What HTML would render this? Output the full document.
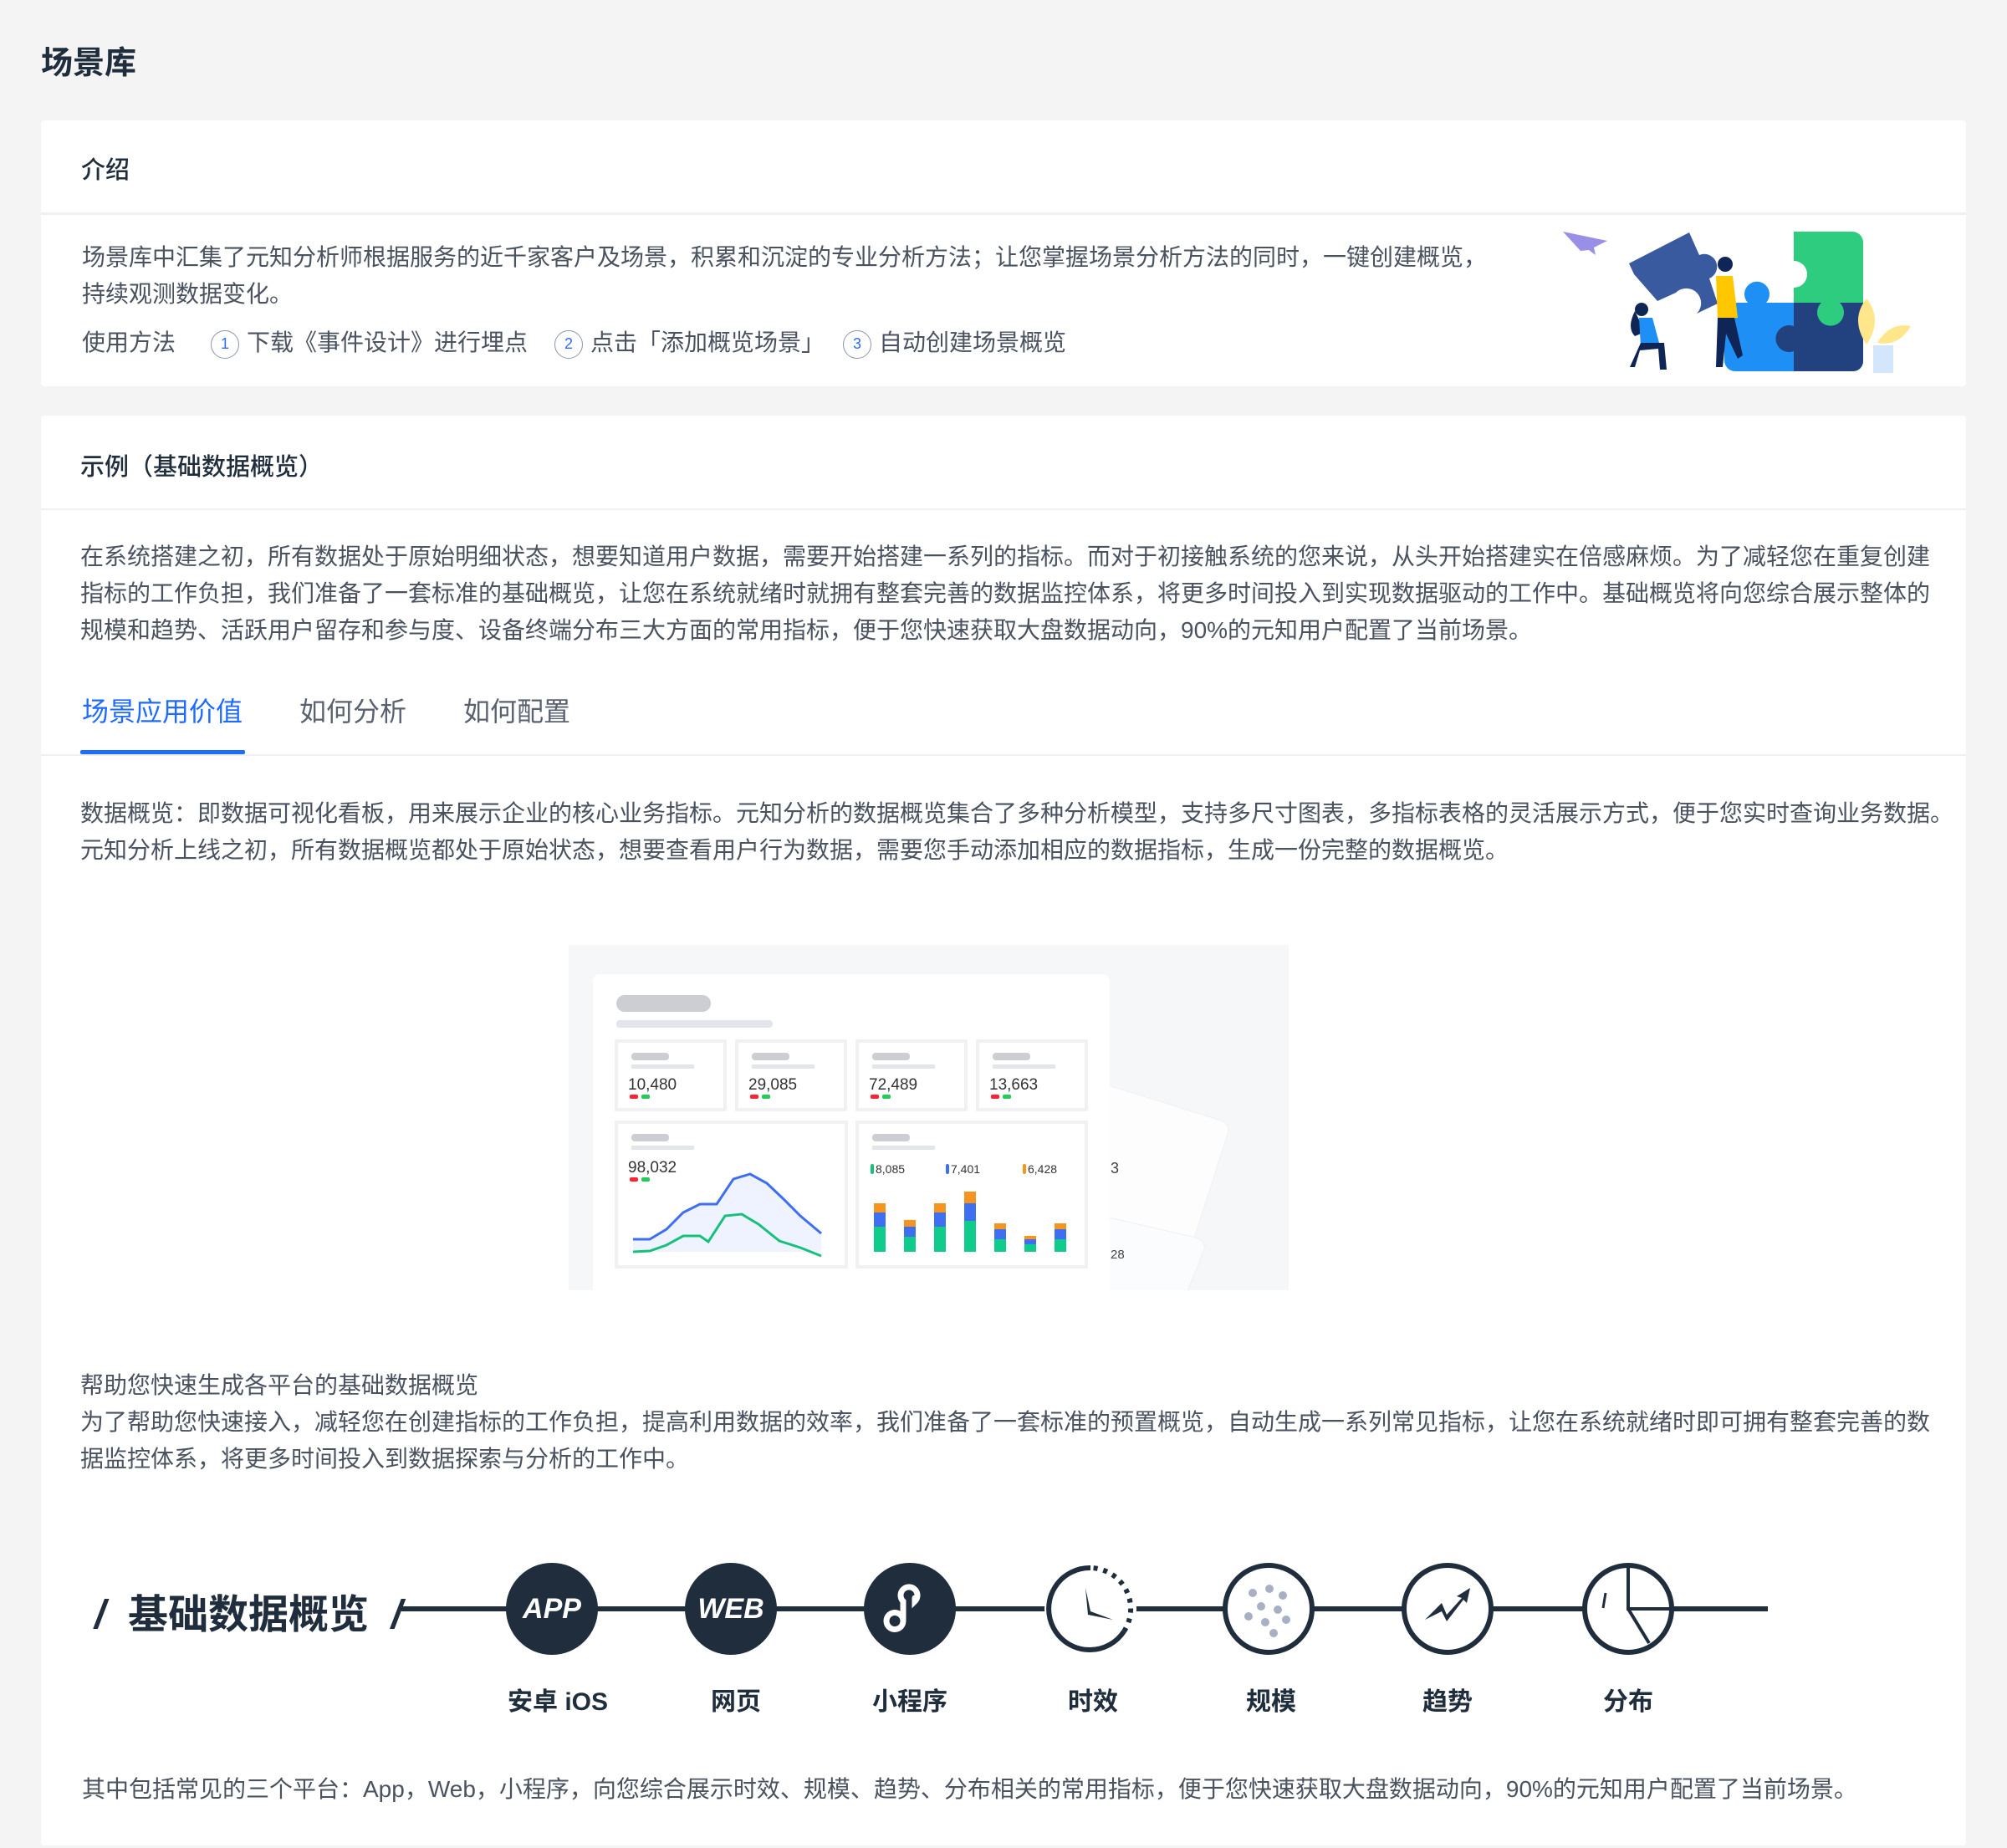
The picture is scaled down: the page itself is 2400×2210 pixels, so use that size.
<!DOCTYPE html>
<html><head><meta charset="utf-8"><style>
*{margin:0;padding:0;box-sizing:border-box}
body{width:2400px;height:2210px;background:#f4f4f4;font-family:"Liberation Sans","Noto Sans CJK SC",sans-serif;color:#1f2d3d;position:relative;overflow:hidden}
.abs{position:absolute;white-space:nowrap}
.card{position:absolute;background:#fff;border-radius:4px}
.hd{font-size:29px;color:#1f2d3d;font-weight:500}
.tx{font-size:28px;color:#4a5260;line-height:44px}
.circ{display:inline-block;width:34px;height:34px;border:1.5px solid #8a96a8;border-radius:50%;color:#2f6bff;font-size:18px;text-align:center;line-height:31px;vertical-align:middle;margin-right:9px}
.node{position:absolute;width:110px;height:110px;border-radius:50%;top:1869px}
.lbl{position:absolute;top:2010px;font-size:30px;font-weight:bold;color:#1f2d3d;width:200px;text-align:center}
</style></head><body>
<div class="abs" style="left:49px;top:44px;font-size:38px;font-weight:bold;color:#1f2d3d">场景库</div>

<div class="card" style="left:49px;top:144px;width:2302px;height:318px">
  <div style="position:absolute;left:0;right:0;top:110px;height:3px;background:#f0f0f0"></div>
</div>
<div class="abs hd" style="left:97px;top:180px">介绍</div>
<div class="abs tx" style="left:98px;top:286px">场景库中汇集了元知分析师根据服务的近千家客户及场景，积累和沉淀的专业分析方法；让您掌握场景分析方法的同时，一键创建概览，<br>持续观测数据变化。</div>
<div class="abs" style="left:98px;top:390px;font-size:28px;color:#4a5260;line-height:40px">使用方法<span style="display:inline-block;width:42px"></span><span class="circ">1</span>下载《事件设计》进行埋点<span style="display:inline-block;width:32px"></span><span class="circ">2</span>点击「添加概览场景」<span style="display:inline-block;width:22px"></span><span class="circ">3</span>自动创建场景概览</div>

<svg class="abs" style="left:1860px;top:270px" width="440" height="185" viewBox="1860 270 440 185">
  <polygon points="1869,277 1922,288 1906,296 1908,305 1900,299 1890,300" fill="#9a8fe6"/>
  <path d="M2145,277 h70 a13 13 0 0 1 13 13 v72 h-83 v-18 a14 14 0 1 0 0-32 z" fill="#2ecc7f"/>
  <path d="M2145,362 h83 v70 a12 12 0 0 1-12 12 h-71 z" fill="#22427f"/>
  <path d="M2178,362 a16 16 0 1 0 22 0 z" fill="#2ecc7f"/>
  <path d="M2062,362 h83 v82 h-70 a13 13 0 0 1-13-13 z" fill="#1e90f5"/>
  <path d="M2090,362 a15 15 0 1 1 22 0 z" fill="#1e90f5"/>
  <path d="M2145,390 a16 16 0 1 0 0 30 z" fill="#22427f"/>
  <path d="M1948,315 l72-37 l12 27 a15 15 0 1 1 12 28 l10 30 l-25 12 a16 16 0 1 0-25 -25 l-22 10 l-28-32 z" fill="#3a5aa0"/>
  <circle cx="1963" cy="370" r="8" fill="#0f2556"/><path d="M1955,372 q-10 20 0 30 l12-5z" fill="#0f2556"/>
  <path d="M1960,380 l16 0 l8 30 l-22 4z" fill="#1e90f5"/><path d="M1962,410 l28 0 l3 32 l-8 0 l-2-25 l-22 2 l-6 20 l-6 0z" fill="#0f2556"/>
  <circle cx="2063" cy="316" r="9" fill="#0f2556"/><path d="M2052,330 l20 0 l6 50 l-24 2z" fill="#ffc700"/>
  <path d="M2054,380 l20 0 l10 45 l-6 4 l-14-30 l-4 40 l-8 0z" fill="#0f2556"/>
  <path d="M2232,412 q-20-30 0-55 q20 25 0 55z M2245,410 q15-25 40-20 q-15 25-40 20z" fill="#ffe68a"/>
  <rect x="2240" y="413" width="24" height="33" fill="#d3e6fb"/>
</svg>

<div class="card" style="left:49px;top:497px;width:2302px;height:1710px">
  <div style="position:absolute;left:0;right:0;top:111px;height:2px;background:#f0f0f0"></div>
  <div style="position:absolute;left:0;right:0;top:405px;height:2px;background:#f0f0f0"></div>
  <div style="position:absolute;left:47px;top:400px;width:197px;height:5px;background:#1f6bff;border-radius:2px"></div>
</div>
<div class="abs hd" style="left:96px;top:535px">示例（基础数据概览）</div>
<div class="abs tx" style="left:96px;top:644px">在系统搭建之初，所有数据处于原始明细状态，想要知道用户数据，需要开始搭建一系列的指标。而对于初接触系统的您来说，从头开始搭建实在倍感麻烦。为了减轻您在重复创建<br>指标的工作负担，我们准备了一套标准的基础概览，让您在系统就绪时就拥有整套完善的数据监控体系，将更多时间投入到实现数据驱动的工作中。基础概览将向您综合展示整体的<br>规模和趋势、活跃用户留存和参与度、设备终端分布三大方面的常用指标，便于您快速获取大盘数据动向，90%的元知用户配置了当前场景。</div>
<div class="abs" style="left:98px;top:826px;font-size:32px;color:#1f6bff">场景应用价值</div>
<div class="abs" style="left:358px;top:826px;font-size:32px;color:#5a6270">如何分析</div>
<div class="abs" style="left:554px;top:826px;font-size:32px;color:#5a6270">如何配置</div>
<div class="abs tx" style="left:96px;top:951px">数据概览：即数据可视化看板，用来展示企业的核心业务指标。元知分析的数据概览集合了多种分析模型，支持多尺寸图表，多指标表格的灵活展示方式，便于您实时查询业务数据。<br>元知分析上线之初，所有数据概览都处于原始状态，想要查看用户行为数据，需要您手动添加相应的数据指标，生成一份完整的数据概览。</div>

<svg class="abs" style="left:680px;top:1130px" width="861" height="413" viewBox="0 0 861 413">
  <rect width="861" height="413" fill="#f6f7f9"/>
  <path d="M620,160 l160 50 q12 4 8 16 l-60 187 h-110z" fill="#fdfdfe" stroke="#eef0f3"/>
  <path d="M620,320 l130 30 q12 4 10 14 l-20 50 h-120z" fill="#fbfcfd" stroke="#eef0f3"/>
  <text x="648" y="273" font-size="18" fill="#444" font-family="Liberation Sans">3</text>
  <text x="648" y="375" font-size="15" fill="#444" font-family="Liberation Sans">28</text>
  <rect x="29" y="35" width="618" height="390" rx="8" fill="#fff"/>
  <rect x="57" y="60" width="113" height="20" rx="10" fill="#ccced3"/>
  <rect x="57" y="90" width="187" height="9" rx="4" fill="#e2e5ea"/>
  <g font-family="Liberation Sans" font-size="19" fill="#333">
  <g transform="translate(57,115)"><rect width="130" height="82" fill="#fff" stroke="#f0f1f3" stroke-width="4"/><rect x="18" y="14" width="45" height="9" rx="4" fill="#ccced3"/><rect x="18" y="28" width="75" height="5" fill="#e2e5ea"/><text x="14" y="58">10,480</text><rect x="16" y="64" width="10" height="5" rx="2" fill="#f23"/><rect x="30" y="64" width="10" height="5" rx="2" fill="#2c5"/></g>
  <g transform="translate(201,115)"><rect width="130" height="82" fill="#fff" stroke="#f0f1f3" stroke-width="4"/><rect x="18" y="14" width="45" height="9" rx="4" fill="#ccced3"/><rect x="18" y="28" width="75" height="5" fill="#e2e5ea"/><text x="14" y="58">29,085</text><rect x="16" y="64" width="10" height="5" rx="2" fill="#f23"/><rect x="30" y="64" width="10" height="5" rx="2" fill="#2c5"/></g>
  <g transform="translate(345,115)"><rect width="130" height="82" fill="#fff" stroke="#f0f1f3" stroke-width="4"/><rect x="18" y="14" width="45" height="9" rx="4" fill="#ccced3"/><rect x="18" y="28" width="75" height="5" fill="#e2e5ea"/><text x="14" y="58">72,489</text><rect x="16" y="64" width="10" height="5" rx="2" fill="#f23"/><rect x="30" y="64" width="10" height="5" rx="2" fill="#2c5"/></g>
  <g transform="translate(489,115)"><rect width="130" height="82" fill="#fff" stroke="#f0f1f3" stroke-width="4"/><rect x="18" y="14" width="45" height="9" rx="4" fill="#ccced3"/><rect x="18" y="28" width="75" height="5" fill="#e2e5ea"/><text x="14" y="58">13,663</text><rect x="16" y="64" width="10" height="5" rx="2" fill="#f23"/><rect x="30" y="64" width="10" height="5" rx="2" fill="#2c5"/></g>
  <g transform="translate(57,212)"><rect width="275" height="173" fill="#fff" stroke="#f0f1f3" stroke-width="4"/><rect x="18" y="14" width="45" height="9" rx="4" fill="#ccced3"/><rect x="18" y="28" width="75" height="5" fill="#e2e5ea"/><text x="14" y="60">98,032</text><rect x="16" y="66" width="10" height="5" rx="2" fill="#f23"/><rect x="30" y="66" width="10" height="5" rx="2" fill="#2c5"/>
  <path d="M20,140 L40,140 L60,128 L80,108 L100,98 L120,98 L140,68 L160,62 L180,73 L200,92 L220,112 L245,133 L245,155 L20,155z" fill="#eef3ff"/>
  <path d="M20,140 L40,140 L60,128 L80,108 L100,98 L120,98 L140,68 L160,62 L180,73 L200,92 L220,112 L245,133" fill="none" stroke="#3d6ff0" stroke-width="3"/>
  <path d="M20,155 L40,154 L60,147 L80,136 L100,136 L110,143 L130,112 L150,110 L170,122 L195,142 L220,150 L245,160" fill="none" stroke="#18c07a" stroke-width="3"/></g>
  <g transform="translate(345,212)"><rect width="274" height="173" fill="#fff" stroke="#f0f1f3" stroke-width="4"/><rect x="18" y="14" width="45" height="9" rx="4" fill="#ccced3"/><rect x="18" y="28" width="75" height="5" fill="#e2e5ea"/>
  <g font-size="14"><rect x="16" y="50" width="4" height="12" rx="2" fill="#18c07a"/><text x="22" y="61">8,085</text><rect x="106" y="50" width="4" height="12" rx="2" fill="#3d6ff0"/><text x="112" y="61">7,401</text><rect x="198" y="50" width="4" height="12" rx="2" fill="#f5951f"/><text x="204" y="61">6,428</text></g>
  <g><rect x="20" y="125" width="14" height="30" fill="#0fcb8c"/><rect x="20" y="108" width="14" height="17" fill="#3d6ff0"/><rect x="20" y="97" width="14" height="11" fill="#f5951f"/>
  <rect x="56" y="137" width="14" height="18" fill="#0fcb8c"/><rect x="56" y="125" width="14" height="12" fill="#3d6ff0"/><rect x="56" y="117" width="14" height="8" fill="#f5951f"/>
  <rect x="92" y="125" width="14" height="30" fill="#0fcb8c"/><rect x="92" y="108" width="14" height="17" fill="#3d6ff0"/><rect x="92" y="97" width="14" height="11" fill="#f5951f"/>
  <rect x="128" y="118" width="14" height="37" fill="#0fcb8c"/><rect x="128" y="97" width="14" height="21" fill="#3d6ff0"/><rect x="128" y="83" width="14" height="14" fill="#f5951f"/>
  <rect x="164" y="140" width="14" height="15" fill="#0fcb8c"/><rect x="164" y="128" width="14" height="12" fill="#3d6ff0"/><rect x="164" y="121" width="14" height="7" fill="#f5951f"/>
  <rect x="200" y="146" width="14" height="9" fill="#0fcb8c"/><rect x="200" y="140" width="14" height="6" fill="#3d6ff0"/><rect x="200" y="136" width="14" height="4" fill="#f5951f"/>
  <rect x="236" y="140" width="14" height="15" fill="#0fcb8c"/><rect x="236" y="128" width="14" height="12" fill="#3d6ff0"/><rect x="236" y="121" width="14" height="7" fill="#f5951f"/></g></g>
  </g>
</svg>

<div class="abs tx" style="left:96px;top:1635px">帮助您快速生成各平台的基础数据概览<br>为了帮助您快速接入，减轻您在创建指标的工作负担，提高利用数据的效率，我们准备了一套标准的预置概览，自动生成一系列常见指标，让您在系统就绪时即可拥有整套完善的数<br>据监控体系，将更多时间投入到数据探索与分析的工作中。</div>

<div class="abs" style="left:113px;top:1891px;font-size:48px;font-weight:bold;color:#1f2d3d;font-style:italic">/&nbsp;&nbsp;<span style="font-style:normal">基础数据概览</span>&nbsp;&nbsp;/</div>
<div class="abs" style="left:480px;top:1921px;width:1634px;height:6px;background:#1f2d3d"></div>
<div class="node" style="left:605px;background:#1f2d3d;color:#fff;font:italic bold 34px 'Liberation Sans',sans-serif;text-align:center;line-height:110px">APP</div>
<div class="node" style="left:819px;background:#1f2d3d;color:#fff;font:italic bold 34px 'Liberation Sans',sans-serif;text-align:center;line-height:110px">WEB</div>
<div class="node" style="left:1033px;background:#1f2d3d"><svg width="110" height="110"><path d="M47,70 a10 10 0 1 1 0-1 M47,68 v-22 a10 10 0 1 1 14 0 v-4" fill="none" stroke="#fff" stroke-width="7" stroke-linecap="round"/></svg></div>
<div class="node" style="left:1249px;background:#fff"><svg width="110" height="110"><path d="M55,6 A49 49 0 1 0 95,82" fill="none" stroke="#1f2d3d" stroke-width="6"/><path d="M95,82 A49 49 0 0 0 55,6" fill="none" stroke="#1f2d3d" stroke-width="6" stroke-dasharray="5 7"/><path d="M49,30 L55,58 L82,68 L52,62z" fill="#1f2d3d"/></svg></div>
<div class="node" style="left:1462px;background:#fff;border:6px solid #1f2d3d"><svg width="98" height="98"><g fill="#a9b0c4"><circle cx="30" cy="30" r="5"/><circle cx="50" cy="25" r="5"/><circle cx="66" cy="33" r="5"/><circle cx="40" cy="46" r="5"/><circle cx="60" cy="50" r="5"/><circle cx="25" cy="58" r="5"/><circle cx="45" cy="65" r="5"/><circle cx="70" cy="62" r="5"/><circle cx="55" cy="78" r="5"/></g></svg></div>
<div class="node" style="left:1676px;background:#fff;border:6px solid #1f2d3d"><svg width="98" height="98"><path d="M22,62 L42,42 L48,56 L66,36 L60,34 L76,24 L72,42 L68,38 L48,64 L42,52 Z" fill="#1f2d3d"/></svg></div>
<div class="node" style="left:1892px;background:#fff;border:6px solid #1f2d3d"><svg width="98" height="98"><path d="M49,0 V49 H98 M49,49 L74,90" fill="none" stroke="#1f2d3d" stroke-width="4"/><path d="M22,30 l-3 18" stroke="#1f2d3d" stroke-width="3"/></svg></div>
<div class="lbl" style="left:567px">安卓 iOS</div>
<div class="lbl" style="left:780px">网页</div>
<div class="lbl" style="left:988px">小程序</div>
<div class="lbl" style="left:1207px">时效</div>
<div class="lbl" style="left:1420px">规模</div>
<div class="lbl" style="left:1631px">趋势</div>
<div class="lbl" style="left:1847px">分布</div>

<div class="abs tx" style="left:98px;top:2118px">其中包括常见的三个平台：App，Web，小程序，向您综合展示时效、规模、趋势、分布相关的常用指标，便于您快速获取大盘数据动向，90%的元知用户配置了当前场景。</div>
</body></html>
